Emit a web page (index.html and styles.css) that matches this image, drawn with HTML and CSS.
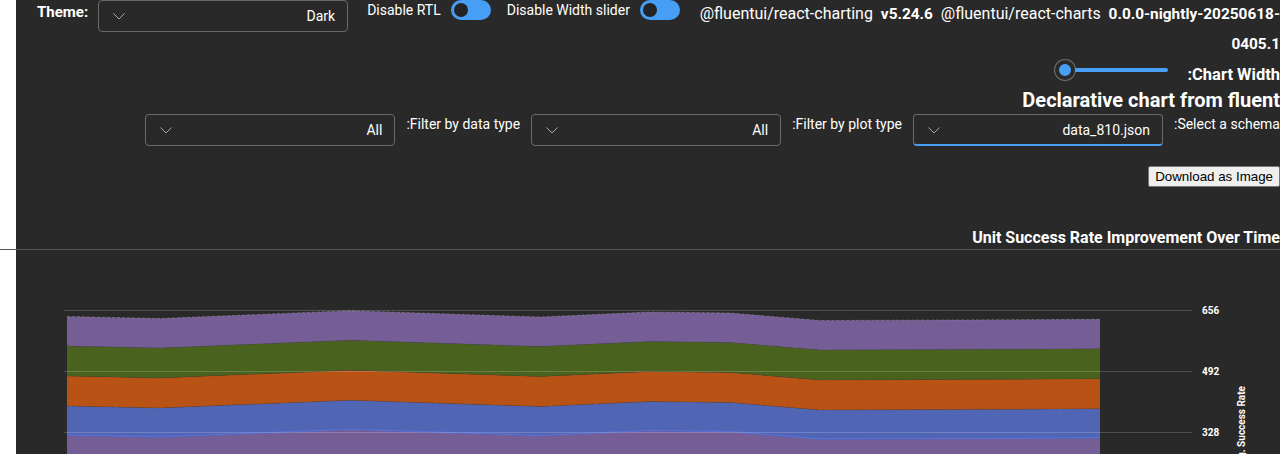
FILE: index.html
```html
<!DOCTYPE html>
<html lang="en">
<head>
<meta charset="utf-8">
<title>Declarative chart</title>
<link rel="stylesheet" href="styles.css">
</head>
<body>
<div class="page">
  <section class="panel top-panel">
    <div class="toolbar">
      <label class="theme-label">Theme:</label>
      <div class="dropdown">
        <svg class="chevron" width="12" height="12" viewBox="0 0 12 12"><polyline points="0.5,3.5 6,9 11.5,3.5" fill="none" stroke="#a8a8a8" stroke-width="1"/></svg>
        <span>Dark</span>
      </div>
      <div class="switch-group">
        <span>Disable RTL</span>
        <span class="switch"><span class="knob"></span></span>
      </div>
      <div class="switch-group second">
        <span>Disable Width slider</span>
        <span class="switch"><span class="knob"></span></span>
      </div>
      <div class="versions">@fluentui/react-charting&nbsp; <b>v5.24.6</b>&nbsp; @fluentui/react-charts&nbsp; <b>0.0.0-nightly-20250618-<br>0405.1</b></div>
    </div>
    <div class="rtl-area" dir="rtl">
      <div class="width-row">
        <label class="strong-label">Chart Width:</label>
        <div class="slider" dir="ltr"><span class="thumb"></span><span class="track"></span></div>
      </div>
      <h1 class="heading">Declarative chart from fluent</h1>
      <div class="filters">
        <label class="filter-label">Select a schema:</label>
        <div class="dropdown focused">
          <span>data_810.json</span>
          <svg class="chevron" width="12" height="12" viewBox="0 0 12 12"><polyline points="0.5,3.5 6,9 11.5,3.5" fill="none" stroke="#a8a8a8" stroke-width="1"/></svg>
        </div>
        <label class="filter-label">Filter by plot type:</label>
        <div class="dropdown">
          <span>All</span>
          <svg class="chevron" width="12" height="12" viewBox="0 0 12 12"><polyline points="0.5,3.5 6,9 11.5,3.5" fill="none" stroke="#a8a8a8" stroke-width="1"/></svg>
        </div>
        <label class="filter-label">Filter by data type:</label>
        <div class="dropdown">
          <span>All</span>
          <svg class="chevron" width="12" height="12" viewBox="0 0 12 12"><polyline points="0.5,3.5 6,9 11.5,3.5" fill="none" stroke="#a8a8a8" stroke-width="1"/></svg>
        </div>
      </div>
      <div class="actions"><button class="download">Download as Image</button></div>
      <div class="chart-title">Unit Success Rate Improvement Over Time</div>
    </div>
  </section>
  <div class="divider"></div>
  <section class="panel chart-panel">
    <svg class="chart" width="1264" height="204" viewBox="16 250 1264 204">
      <polygon fill="#755d95" points="67,435.5 160,437.5 350,429.7 540,436 650,431 730,432 820,439.5 1100,438.3 1100,480 67,480"/>
      <polygon fill="#5165b5" points="67,406 160,408 350,400.2 540,406.5 650,401.5 730,402.5 820,410 1100,408.8 1100,438.3 820,439.5 730,432 650,431 540,436 350,429.7 160,437.5 67,435.5"/>
      <polygon fill="#b95215" points="67,376 160,378 350,370.2 540,376.5 650,371.5 730,372.5 820,380 1100,378.8 1100,408.8 820,410 730,402.5 650,401.5 540,406.5 350,400.2 160,408 67,406"/>
      <polygon fill="#49631f" points="67,346 160,348 350,340.2 540,346.5 650,341.5 730,342.5 820,350 1100,348.8 1100,378.8 820,380 730,372.5 650,371.5 540,376.5 350,370.2 160,378 67,376"/>
      <polygon fill="#755d95" points="67,316.5 160,318.5 350,310.7 540,317 650,312 730,313 820,320.5 1100,319.3 1100,348.8 820,350 730,342.5 650,341.5 540,346.5 350,340.2 160,348 67,346"/>
      <g fill="none" stroke-width="1">
        <polyline stroke="rgba(160,160,160,0.45)" stroke-dasharray="3 2" points="67,316.5 160,318.5 350,310.7 540,317 650,312 730,313 820,320.5 1100,319.3"/>
        <polyline stroke="rgba(60,60,60,0.35)" stroke-dasharray="3 2" points="67,346 160,348 350,340.2 540,346.5 650,341.5 730,342.5 820,350 1100,348.8"/>
        <polyline stroke="rgba(60,60,60,0.35)" stroke-dasharray="3 2" points="67,376 160,378 350,370.2 540,376.5 650,371.5 730,372.5 820,380 1100,378.8"/>
        <polyline stroke="rgba(60,60,60,0.35)" stroke-dasharray="3 2" points="67,406 160,408 350,400.2 540,406.5 650,401.5 730,402.5 820,410 1100,408.8"/>
        <polyline stroke="#5a6fd0" stroke-width="1.5" points="67,435 160,437 350,429.2 540,435.5 650,430.5 730,431.5 820,439 1100,437.8"/>
      </g>
      <g stroke="rgba(255,255,255,0.18)" stroke-width="1">
        <line x1="64" y1="310.5" x2="1192" y2="310.5"/>
        <line x1="64" y1="371.5" x2="1192" y2="371.5"/>
        <line x1="64" y1="432.5" x2="1192" y2="432.5"/>
      </g>
      <g class="tick" fill="#ffffff">
        <text x="1202" y="314">656</text>
        <text x="1202" y="375">492</text>
        <text x="1202" y="436">328</text>
      </g>
      <text class="axis-title" transform="translate(1245,386) rotate(-90)" text-anchor="end">Avg. Success Rate</text>
    </svg>
  </section>
</div>
</body>
</html>
```

FILE: styles.css
```css
html, body {
  margin: 0;
  padding: 0;
  width: 1280px;
  height: 454px;
  overflow: hidden;
  background: #ffffff;
}

body {
  font-family: Roboto, "Segoe UI", "Liberation Sans", sans-serif;
  color: #ffffff;
}

.page {
  width: 1280px;
}

.panel {
  margin-left: 16px;
  background: #292929;
}

.top-panel {
  height: 249px;
  display: flex;
  flex-direction: column;
}

/* top toolbar */
.toolbar {
  display: flex;
  align-items: flex-start;
  height: 60px;
}

.theme-label {
  flex: none;
  font-size: 15px;
  font-weight: 700;
  line-height: 24px;
  margin-left: 21px;
  margin-right: 10px;
}

.dropdown {
  flex: none;
  box-sizing: border-box;
  width: 250px;
  height: 32px;
  border: 1px solid #6a6a6a;
  border-radius: 4px;
  display: flex;
  align-items: center;
  justify-content: space-between;
  padding: 0 12px 0 14px;
  font-size: 14px;
  color: #ffffff;
  background: #292929;
}

.dropdown .chevron {
  flex: none;
}

.dropdown.focused {
  border-bottom: 2px solid #479ef5;
}

.switch-group {
  flex: none;
  display: flex;
  align-items: center;
  gap: 10px;
  height: 20px;
  margin-left: 19px;
  font-size: 14px;
  line-height: 20px;
  white-space: nowrap;
}

.switch-group.second {
  margin-left: 16px;
  gap: 10px;
}

.switch {
  flex: none;
  box-sizing: border-box;
  width: 40px;
  height: 20px;
  border-radius: 10px;
  background: #479ef5;
  display: flex;
  align-items: center;
  padding: 0 3px;
}

.knob {
  width: 14px;
  height: 14px;
  border-radius: 50%;
  background: #242424;
}

.versions {
  flex: 1;
  margin-left: 15px;
  margin-top: -1px;
  text-align: right;
  font-size: 16px;
  line-height: 30px;
  white-space: nowrap;
}

.versions b {
  font-weight: 700;
  font-size: 15.4px;
}

/* right-to-left area */
.rtl-area {
  display: flex;
  flex-direction: column;
  align-items: flex-start;
}

.width-row {
  display: flex;
  align-items: flex-start;
  gap: 19px;
  height: 25px;
}

.strong-label {
  font-size: 16.5px;
  font-weight: 700;
  line-height: 20px;
  margin-top: 5px;
  white-space: nowrap;
}

.slider {
  display: flex;
  align-items: center;
  height: 20px;
}

.thumb {
  box-sizing: border-box;
  width: 20px;
  height: 20px;
  border-radius: 50%;
  background: #479ef5;
  border: 4px solid #292929;
  box-shadow: 0 0 0 1px #6e6e6e;
}

.track {
  width: 93px;
  height: 4px;
  border-radius: 0 2px 2px 0;
  background: #479ef5;
}

.heading {
  margin: 3px 0 2px;
  font-size: 20px;
  font-weight: 700;
  line-height: 24px;
  white-space: nowrap;
}

.filters {
  display: flex;
  align-items: flex-start;
  gap: 11px;
  height: 32px;
}

.filter-label {
  font-size: 14px;
  line-height: 20px;
  white-space: nowrap;
}

.actions {
  margin-top: 20px;
}

.download {
  font-family: "Liberation Sans", Arial, sans-serif;
  font-size: 13.33px;
  color: #000000;
  background: #efefef;
  border: 1px solid #767676;
  border-radius: 2px;
  padding: 1px 6px;
  height: 21px;
  line-height: 17px;
}

.chart-title {
  margin-top: 41px;
  font-size: 16px;
  font-weight: 700;
  line-height: 20px;
  white-space: nowrap;
}

.divider {
  height: 1px;
  background: #575757;
}

.chart-panel {
  height: 204px;
}

.chart {
  display: block;
}

.tick text {
  font-family: Roboto, "Segoe UI", sans-serif;
  font-size: 10px;
  font-weight: 700;
}

.axis-title {
  font-family: Roboto, "Segoe UI", sans-serif;
  font-size: 10px;
  font-weight: 700;
  fill: #ffffff;
}
```
